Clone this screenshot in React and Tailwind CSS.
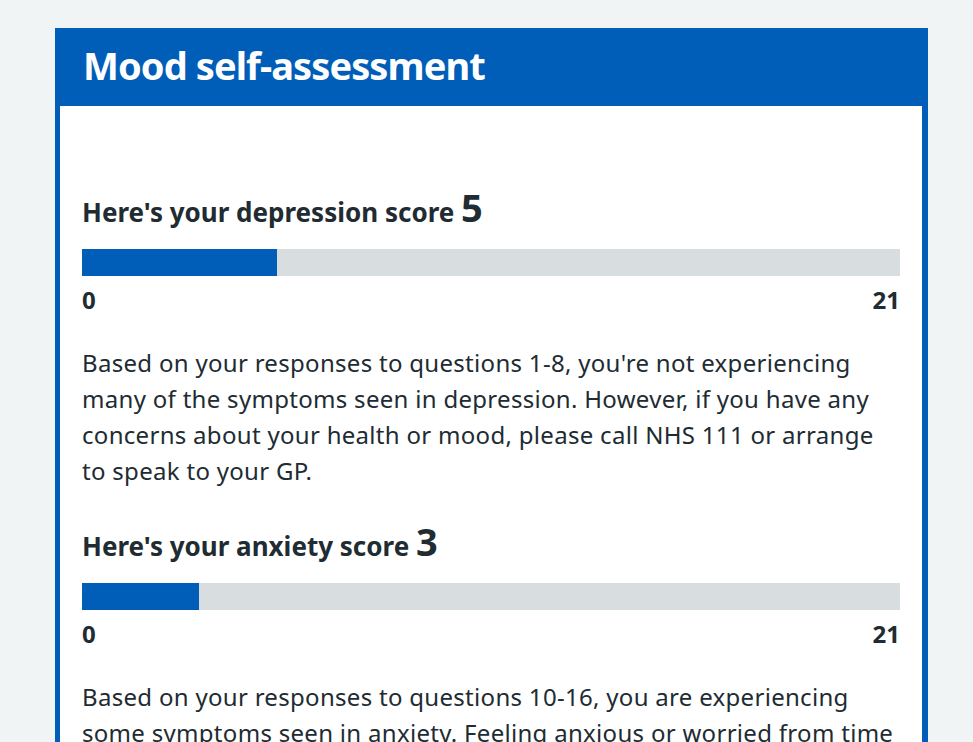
import React from "react";

const scores = [
    {
        label: "depression",
        score: 5,
        max: 21,
        text: "Based on your responses to questions 1-8, you're not experiencing many of the symptoms seen in depression. However, if you have any concerns about your health or mood, please call NHS 111 or arrange to speak to your GP.",
    },
    {
        label: "anxiety",
        score: 3,
        max: 21,
        text: "Based on your responses to questions 10-16, you are experiencing some symptoms seen in anxiety. Feeling anxious or worried from time to time is a normal part of life, but if these feelings are affecting your daily life, please speak to your GP.",
    },
];

const ScoreBlock = ({label, score, max, text}) => (
    <section className="mb-[33px]">
        <h2 className="text-[26px] font-bold leading-[40px] text-[#212b32]">
            Here's your {label} score <span className="text-[38px] leading-none">{score}</span>
        </h2>
        <div className="mt-[17px] h-[27px] w-full bg-[#d8dde0]">
            <div className="h-full bg-[#005eb8]" style={{width: `${(score / max) * 100}%`}}/>
        </div>
        <div className="mt-[8px] flex justify-between text-[24px] font-bold leading-[32px] text-[#212b32]">
            <span>0</span>
            <span>{max}</span>
        </div>
        <p className="mt-[29px] text-[24px] leading-[36px] tracking-[0.3px] text-[#212b32]">{text}</p>
    </section>
);

export default function App() {
    return (
        <div className="min-h-screen bg-[#f0f4f5] pl-[55px] pt-[28px]" style={{fontFamily: "'Noto Sans', sans-serif"}}>
            <div className="w-[873px] bg-white">
                <div className="h-[78px] bg-[#005eb8] px-[28px]">
                    <h1 className="text-[38px] font-bold leading-[74px] tracking-[-0.9px] text-white">Mood self-assessment</h1>
                </div>
                <div className="border-l-[5px] border-r-[6px] border-[#005eb8] px-[22px] pt-[82px]">
                    {scores.map((s) => (
                        <ScoreBlock key={s.label} {...s}/>
                    ))}
                </div>
            </div>
        </div>
    );
}
